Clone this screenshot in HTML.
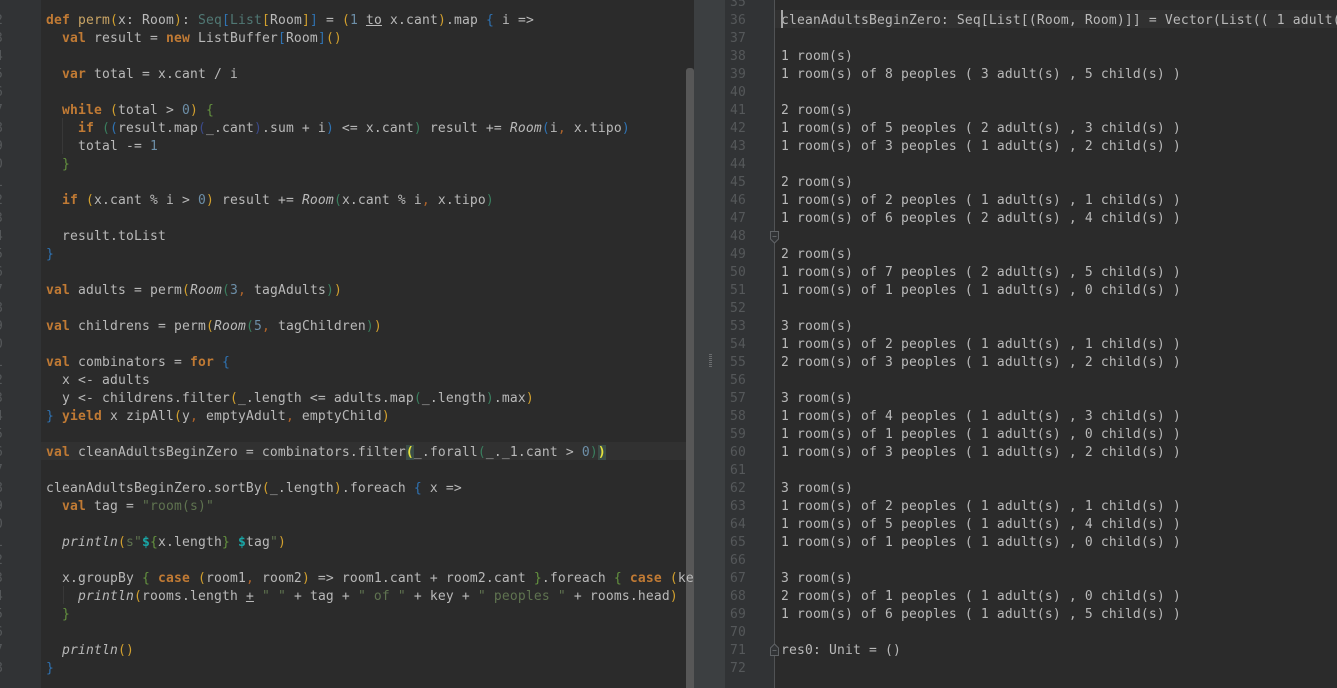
<!DOCTYPE html>
<html><head><meta charset="utf-8"><style>
html,body{margin:0;padding:0;width:1337px;height:688px;overflow:hidden;background:#2b2b2b}
*{box-sizing:border-box}
.a{position:absolute}
.c{position:absolute;margin-top:2px;filter:blur(.3px);white-space:pre;font:13px/18px "DejaVu Sans Mono","Liberation Mono",monospace;letter-spacing:.17px;color:#b9b9b9;height:18px;font-variant-ligatures:none}
.n{position:absolute;margin-top:2px;filter:blur(.3px);white-space:pre;font:13px/18px "DejaVu Sans Mono","Liberation Mono",monospace;letter-spacing:.17px;color:#55585a;height:18px;text-align:right}
.k{color:#c07a34;font-weight:bold}.f{color:#c9a465}.s{color:#5f7350}.d{color:#6d8fa8}.i{font-style:italic}
.y{color:#d2a02e}.g{color:#64923f}.b{color:#2f73b3}.t{color:#3a7f5f}.o{color:#b0642a}.p{color:#3b4a8a}.q{color:#19a5a5;font-weight:bold}
.e{color:#507874}.m{color:#e4e23c;font-weight:bold;background:#3a4d48}
#L{position:absolute;left:0;top:0;width:694px;height:688px;overflow:hidden}
#R{position:absolute;left:725px;top:0;width:612px;height:688px;overflow:hidden}
</style></head><body>
<div id="L">
<div class="a" style="left:0;top:0;width:41px;height:688px;background:#313335"></div>
<div class="a" style="left:41px;top:442px;width:653px;height:18px;background:#313131"></div>
<div class="a" style="left:62px;top:118px;width:1px;height:36px;background:#383838"></div>
<div class="a" style="left:63px;top:586px;width:1px;height:18px;background:#383838"></div>
<div class="a" style="left:686px;top:68px;width:8px;height:620px;background:#575757;border-radius:3px 3px 0 0"></div>
<div class="n" style="left:-37px;top:10px;width:40px">2</div><div class="n" style="left:-37px;top:28px;width:40px">3</div><div class="n" style="left:-37px;top:46px;width:40px">4</div><div class="n" style="left:-37px;top:64px;width:40px">5</div><div class="n" style="left:-37px;top:82px;width:40px">6</div><div class="n" style="left:-37px;top:100px;width:40px">7</div><div class="n" style="left:-37px;top:118px;width:40px">8</div><div class="n" style="left:-37px;top:136px;width:40px">9</div><div class="n" style="left:-37px;top:154px;width:40px">0</div><div class="n" style="left:-37px;top:172px;width:40px">1</div><div class="n" style="left:-37px;top:190px;width:40px">2</div><div class="n" style="left:-37px;top:208px;width:40px">3</div><div class="n" style="left:-37px;top:226px;width:40px">4</div><div class="n" style="left:-37px;top:244px;width:40px">5</div><div class="n" style="left:-37px;top:262px;width:40px">6</div><div class="n" style="left:-37px;top:280px;width:40px">7</div><div class="n" style="left:-37px;top:298px;width:40px">8</div><div class="n" style="left:-37px;top:316px;width:40px">9</div><div class="n" style="left:-37px;top:334px;width:40px">0</div><div class="n" style="left:-37px;top:352px;width:40px">1</div><div class="n" style="left:-37px;top:370px;width:40px">2</div><div class="n" style="left:-37px;top:388px;width:40px">3</div><div class="n" style="left:-37px;top:406px;width:40px">4</div><div class="n" style="left:-37px;top:424px;width:40px">5</div><div class="n" style="left:-37px;top:442px;width:40px">6</div><div class="n" style="left:-37px;top:460px;width:40px">7</div><div class="n" style="left:-37px;top:478px;width:40px">8</div><div class="n" style="left:-37px;top:496px;width:40px">9</div><div class="n" style="left:-37px;top:514px;width:40px">0</div><div class="n" style="left:-37px;top:532px;width:40px">1</div><div class="n" style="left:-37px;top:550px;width:40px">2</div><div class="n" style="left:-37px;top:568px;width:40px">3</div><div class="n" style="left:-37px;top:586px;width:40px">4</div><div class="n" style="left:-37px;top:604px;width:40px">5</div><div class="n" style="left:-37px;top:622px;width:40px">6</div><div class="n" style="left:-37px;top:640px;width:40px">7</div><div class="n" style="left:-37px;top:658px;width:40px">8</div>

<div class="c" style="left:46px;top:10px"><span class="k">def</span> <span class="f">perm</span><span class="y">(</span>x: Room<span class="y">)</span>: <span class="e">Seq</span><span class="b">[</span><span class="e">List</span><span class="y">[</span>Room<span class="y">]</span><span class="b">]</span> = <span class="y">(</span><span class="d">1</span> <u>to</u> x.cant<span class="y">)</span>.map <span class="b">{</span> i =&gt;</div>
<div class="c" style="left:46px;top:28px">  <span class="k">val</span> result = <span class="k">new</span> ListBuffer<span class="b">[</span>Room<span class="b">]</span><span class="y">()</span></div>
<div class="c" style="left:46px;top:64px">  <span class="k">var</span> total = x.cant / i</div>
<div class="c" style="left:46px;top:100px">  <span class="k">while</span> <span class="y">(</span>total &gt; <span class="d">0</span><span class="y">)</span> <span class="g">{</span></div>
<div class="c" style="left:46px;top:118px">    <span class="k">if</span> <span class="t">(</span><span class="b">(</span>result.map<span class="p">(</span>_.cant<span class="p">)</span>.sum + i<span class="b">)</span> &lt;= x.cant<span class="t">)</span> result += <span class="i">Room</span><span class="b">(</span>i<span class="o">,</span> x.tipo<span class="b">)</span></div>
<div class="c" style="left:46px;top:136px">    total -= <span class="d">1</span></div>
<div class="c" style="left:46px;top:154px">  <span class="g">}</span></div>
<div class="c" style="left:46px;top:190px">  <span class="k">if</span> <span class="y">(</span>x.cant % i &gt; <span class="d">0</span><span class="y">)</span> result += <span class="i">Room</span><span class="t">(</span>x.cant % i<span class="o">,</span> x.tipo<span class="t">)</span></div>
<div class="c" style="left:46px;top:226px">  result.toList</div>
<div class="c" style="left:46px;top:244px"><span class="b">}</span></div>
<div class="c" style="left:46px;top:280px"><span class="k">val</span> adults = perm<span class="y">(</span><span class="i">Room</span><span class="t">(</span><span class="d">3</span><span class="o">,</span> tagAdults<span class="t">)</span><span class="y">)</span></div>
<div class="c" style="left:46px;top:316px"><span class="k">val</span> childrens = perm<span class="y">(</span><span class="i">Room</span><span class="t">(</span><span class="d">5</span><span class="o">,</span> tagChildren<span class="t">)</span><span class="y">)</span></div>
<div class="c" style="left:46px;top:352px"><span class="k">val</span> combinators = <span class="k">for</span> <span class="b">{</span></div>
<div class="c" style="left:46px;top:370px">  x &lt;- adults</div>
<div class="c" style="left:46px;top:388px">  y &lt;- childrens.filter<span class="y">(</span>_.length &lt;= adults.map<span class="t">(</span>_.length<span class="t">)</span>.max<span class="y">)</span></div>
<div class="c" style="left:46px;top:406px"><span class="b">}</span> <span class="k">yield</span> x zipAll<span class="y">(</span>y<span class="o">,</span> emptyAdult<span class="o">,</span> emptyChild<span class="y">)</span></div>
<div class="c" style="left:46px;top:442px"><span class="k">val</span> cleanAdultsBeginZero = combinators.filter<span class="m">(</span>_.forall<span class="t">(</span>_._1.cant &gt; <span class="d">0</span><span class="t">)</span><span class="m">)</span></div>
<div class="c" style="left:46px;top:478px">cleanAdultsBeginZero.sortBy<span class="y">(</span>_.length<span class="y">)</span>.foreach <span class="b">{</span> x =&gt;</div>
<div class="c" style="left:46px;top:496px">  <span class="k">val</span> tag = <span class="s">"room(s)"</span></div>
<div class="c" style="left:46px;top:532px">  <span class="i">println</span><span class="y">(</span><span class="s">s"</span><span class="q">$</span><span class="g">{</span>x.length<span class="g">}</span> <span class="q">$</span>tag<span class="s">"</span><span class="y">)</span></div>
<div class="c" style="left:46px;top:568px">  x.groupBy <span class="g">{</span> <span class="k">case</span> <span class="y">(</span>room1<span class="o">,</span> room2<span class="y">)</span> =&gt; room1.cant + room2.cant <span class="g">}</span>.foreach <span class="g">{</span> <span class="k">case</span> <span class="y">(</span>key, rooms<span class="y">)</span> =&gt;</div>
<div class="c" style="left:46px;top:586px">    <span class="i">println</span><span class="y">(</span>rooms.length <u>+</u> <span class="s">" "</span> + tag + <span class="s">" of "</span> + key + <span class="s">" peoples "</span> + rooms.head<span class="y">)</span></div>
<div class="c" style="left:46px;top:604px">  <span class="g">}</span></div>
<div class="c" style="left:46px;top:640px">  <span class="i">println</span><span class="y">()</span></div>
<div class="c" style="left:46px;top:658px"><span class="b">}</span></div>
</div>

<div class="a" style="left:694px;top:0;width:31px;height:688px;background:#3c3f41"></div>
<div class="a" style="left:709px;top:354px;width:3px;height:14px;background:repeating-linear-gradient(#77797b 0 1px,transparent 1px 2px);opacity:.8"></div>

<div class="a" style="left:725px;top:0;width:49px;height:688px;background:#313335"></div>
<div class="a" style="left:774px;top:0;width:1px;height:688px;background:#515355"></div>

<div id="R">
<div class="a" style="left:50px;top:10px;width:562px;height:18px;background:#313131"></div>
<div class="n" style="left:0;top:-8px;width:21px">35</div><div class="n" style="left:0;top:10px;width:21px">36</div><div class="n" style="left:0;top:28px;width:21px">37</div><div class="n" style="left:0;top:46px;width:21px">38</div><div class="n" style="left:0;top:64px;width:21px">39</div><div class="n" style="left:0;top:82px;width:21px">40</div><div class="n" style="left:0;top:100px;width:21px">41</div><div class="n" style="left:0;top:118px;width:21px">42</div><div class="n" style="left:0;top:136px;width:21px">43</div><div class="n" style="left:0;top:154px;width:21px">44</div><div class="n" style="left:0;top:172px;width:21px">45</div><div class="n" style="left:0;top:190px;width:21px">46</div><div class="n" style="left:0;top:208px;width:21px">47</div><div class="n" style="left:0;top:226px;width:21px">48</div><div class="n" style="left:0;top:244px;width:21px">49</div><div class="n" style="left:0;top:262px;width:21px">50</div><div class="n" style="left:0;top:280px;width:21px">51</div><div class="n" style="left:0;top:298px;width:21px">52</div><div class="n" style="left:0;top:316px;width:21px">53</div><div class="n" style="left:0;top:334px;width:21px">54</div><div class="n" style="left:0;top:352px;width:21px">55</div><div class="n" style="left:0;top:370px;width:21px">56</div><div class="n" style="left:0;top:388px;width:21px">57</div><div class="n" style="left:0;top:406px;width:21px">58</div><div class="n" style="left:0;top:424px;width:21px">59</div><div class="n" style="left:0;top:442px;width:21px">60</div><div class="n" style="left:0;top:460px;width:21px">61</div><div class="n" style="left:0;top:478px;width:21px">62</div><div class="n" style="left:0;top:496px;width:21px">63</div><div class="n" style="left:0;top:514px;width:21px">64</div><div class="n" style="left:0;top:532px;width:21px">65</div><div class="n" style="left:0;top:550px;width:21px">66</div><div class="n" style="left:0;top:568px;width:21px">67</div><div class="n" style="left:0;top:586px;width:21px">68</div><div class="n" style="left:0;top:604px;width:21px">69</div><div class="n" style="left:0;top:622px;width:21px">70</div><div class="n" style="left:0;top:640px;width:21px">71</div><div class="n" style="left:0;top:658px;width:21px">72</div>

<div class="c" style="left:56px;top:10px">cleanAdultsBeginZero: Seq[List[(Room, Room)]] = Vector(List(( 1 adult(s) , 5 child(s) ))</div>
<div class="a" style="left:56px;top:10px;width:2px;height:18px;background:#a8a8a8"></div>
<div class="c" style="left:56px;top:46px">1 room(s)</div>
<div class="c" style="left:56px;top:64px">1 room(s) of 8 peoples ( 3 adult(s) , 5 child(s) )</div>
<div class="c" style="left:56px;top:100px">2 room(s)</div>
<div class="c" style="left:56px;top:118px">1 room(s) of 5 peoples ( 2 adult(s) , 3 child(s) )</div>
<div class="c" style="left:56px;top:136px">1 room(s) of 3 peoples ( 1 adult(s) , 2 child(s) )</div>
<div class="c" style="left:56px;top:172px">2 room(s)</div>
<div class="c" style="left:56px;top:190px">1 room(s) of 2 peoples ( 1 adult(s) , 1 child(s) )</div>
<div class="c" style="left:56px;top:208px">1 room(s) of 6 peoples ( 2 adult(s) , 4 child(s) )</div>
<div class="c" style="left:56px;top:244px">2 room(s)</div>
<div class="c" style="left:56px;top:262px">1 room(s) of 7 peoples ( 2 adult(s) , 5 child(s) )</div>
<div class="c" style="left:56px;top:280px">1 room(s) of 1 peoples ( 1 adult(s) , 0 child(s) )</div>
<div class="c" style="left:56px;top:316px">3 room(s)</div>
<div class="c" style="left:56px;top:334px">1 room(s) of 2 peoples ( 1 adult(s) , 1 child(s) )</div>
<div class="c" style="left:56px;top:352px">2 room(s) of 3 peoples ( 1 adult(s) , 2 child(s) )</div>
<div class="c" style="left:56px;top:388px">3 room(s)</div>
<div class="c" style="left:56px;top:406px">1 room(s) of 4 peoples ( 1 adult(s) , 3 child(s) )</div>
<div class="c" style="left:56px;top:424px">1 room(s) of 1 peoples ( 1 adult(s) , 0 child(s) )</div>
<div class="c" style="left:56px;top:442px">1 room(s) of 3 peoples ( 1 adult(s) , 2 child(s) )</div>
<div class="c" style="left:56px;top:478px">3 room(s)</div>
<div class="c" style="left:56px;top:496px">1 room(s) of 2 peoples ( 1 adult(s) , 1 child(s) )</div>
<div class="c" style="left:56px;top:514px">1 room(s) of 5 peoples ( 1 adult(s) , 4 child(s) )</div>
<div class="c" style="left:56px;top:532px">1 room(s) of 1 peoples ( 1 adult(s) , 0 child(s) )</div>
<div class="c" style="left:56px;top:568px">3 room(s)</div>
<div class="c" style="left:56px;top:586px">2 room(s) of 1 peoples ( 1 adult(s) , 0 child(s) )</div>
<div class="c" style="left:56px;top:604px">1 room(s) of 6 peoples ( 1 adult(s) , 5 child(s) )</div>
<div class="c" style="left:56px;top:640px">res0: Unit = ()</div>
</div>

<svg class="a" style="left:769px;top:231px" width="11" height="13" viewBox="0 0 11 13"><path d="M1.5 .5H9.5V8L5.5 12L1.5 8Z" fill="#313335" stroke="#606366"/><path d="M3.5 5.5H7.5" stroke="#606366"/></svg>
<svg class="a" style="left:769px;top:643px" width="11" height="13" viewBox="0 0 11 13"><path d="M1.5 12.5H9.5V5L5.5 1L1.5 5Z" fill="#313335" stroke="#606366"/><path d="M3.5 7.5H7.5" stroke="#606366"/></svg>
</body></html>
